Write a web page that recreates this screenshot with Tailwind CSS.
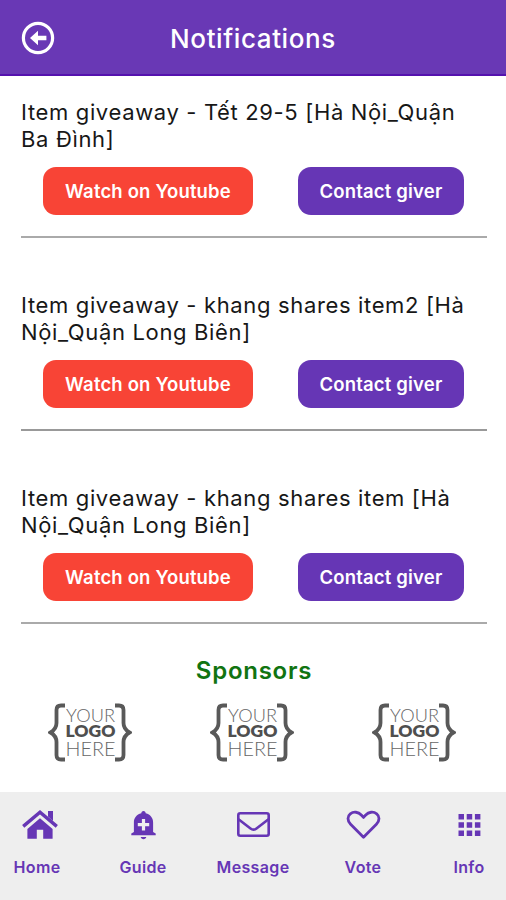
<!DOCTYPE html>
<html lang="vi">
<head>
<meta charset="utf-8">
<title>Notifications</title>
<script src="https://cdn.jsdelivr.net/npm/@tailwindcss/browser@4"></script>
</head>
<body class="bg-white">
<div class="flex h-[900px] w-[506px] flex-col overflow-hidden bg-white font-['Inter',sans-serif] text-[#171717]">
  <header class="grid h-[76px] shrink-0 grid-cols-[76px_1fr_76px] items-center border-b-2 border-[#5512ae] bg-[#6938b5] pt-0.5">
    <svg class="ml-[21px] size-[34px]" viewBox="0 0 34 34" fill="none"><circle cx="17" cy="17" r="14.6" stroke="#fff" stroke-width="3.200"/><path d="M9 17l8-7.200v4.900h8.400v4.600H17v4.900z" fill="#fff"/></svg>
    <h1 class="pt-0.5 text-center text-[26px] leading-8 font-medium tracking-[0.6px] whitespace-nowrap text-white">Notifications</h1>
  </header>
  <main class="flex flex-1 flex-col pr-[19px] pl-[21px]">
    <article class="h-[162px] border-b-2 border-[#aaaaaa] pt-[23px]">
      <h2 class="text-[22px] leading-[27px] tracking-[0.65px] whitespace-nowrap">Item giveaway - Tết 29-5 [Hà Nội_Quận<br>Ba Đình]</h2>
      <div class="mt-[14px] flex gap-[45px] pl-[22px] text-[18.5px] font-semibold tracking-[0.17px] text-white">
        <button class="h-12 w-[210px] rounded-[13px] bg-[#f84436] pt-px whitespace-nowrap">Watch on Youtube</button>
        <button class="h-12 w-[166px] rounded-[13px] bg-[#6636b5] pt-px whitespace-nowrap">Contact giver</button>
      </div>
    </article>
    <article class="mt-[31px] h-[162px] border-b-2 border-[#999999] pt-[23px]">
      <h2 class="text-[22px] leading-[27px] tracking-[0.65px] whitespace-nowrap">Item giveaway - khang shares item2 [Hà<br>Nội_Quận Long Biên]</h2>
      <div class="mt-[14px] flex gap-[45px] pl-[22px] text-[18.5px] font-semibold tracking-[0.17px] text-white">
        <button class="h-12 w-[210px] rounded-[13px] bg-[#f84436] pt-px whitespace-nowrap">Watch on Youtube</button>
        <button class="h-12 w-[166px] rounded-[13px] bg-[#6636b5] pt-px whitespace-nowrap">Contact giver</button>
      </div>
    </article>
    <article class="mt-[31px] h-[162px] border-b-2 border-[#aaaaaa] pt-[23px]">
      <h2 class="text-[22px] leading-[27px] tracking-[0.65px] whitespace-nowrap">Item giveaway - khang shares item [Hà<br>Nội_Quận Long Biên]</h2>
      <div class="mt-[14px] flex gap-[45px] pl-[22px] text-[18.5px] font-semibold tracking-[0.17px] text-white">
        <button class="h-12 w-[210px] rounded-[13px] bg-[#f84436] pt-px whitespace-nowrap">Watch on Youtube</button>
        <button class="h-12 w-[166px] rounded-[13px] bg-[#6636b5] pt-px whitespace-nowrap">Contact giver</button>
      </div>
    </article>
    <h2 class="mt-[31px] text-center text-[24px] leading-8 font-semibold tracking-[0.75px] text-[#117411]">Sponsors</h2>
    <div class="mt-4 flex gap-[78px] pl-[27px]">
      <svg class="h-[60px] w-[84px] shrink-0" viewBox="0 0 84 60"><use href="#logo"/></svg>
      <svg class="h-[60px] w-[84px] shrink-0" viewBox="0 0 84 60"><use href="#logo"/></svg>
      <svg class="h-[60px] w-[84px] shrink-0" viewBox="0 0 84 60"><use href="#logo"/></svg>
    </div>
  </main>
  <nav class="grid h-[108px] shrink-0 grid-cols-[74px_138px_82px_138px_74px] bg-[#eeeeee] pt-4 text-[16px] font-semibold tracking-[0.35px] text-[#6636b5]">
    <a class="flex flex-col items-center gap-[17px]">
      <svg class="ml-[6px] h-8 w-[38px]" viewBox="0 0 38 32" fill="currentColor"><path d="M27 3h5v10l-5-4.400z"/><path d="M19 10.200 31.600 21v9.700H22.200v-9h-6.400v9H6.400V21z"/><path d="M2.200 18.400 19 4.200l16.800 14.200" fill="none" stroke="currentColor" stroke-width="3.400"/></svg>
      <span class="leading-5">Home</span></a>
    <a class="flex flex-col items-center gap-[17px]">
      <svg class="h-8 w-[38px]" viewBox="0 0 38 32"><path d="M19.500 3c1.400 0 2.200 1 2.200 2.300 4.800 1.200 7.400 4.800 7.400 9.200V24l2.600 1.600V27.300H7.300v-1.700L9.900 24v-9.500c0-4.400 2.600-8 7.400-9.200C17.300 4 18.100 3 19.500 3zM16.700 29h5.600c-.3 1.400-1.400 2.200-2.800 2.200s-2.500-.8-2.800-2.200z" fill="currentColor"/><path d="M19.500 11v11.400M13.800 16.700h11.400" stroke="#eee" stroke-width="3.200"/></svg>
      <span class="leading-5">Guide</span></a>
    <a class="flex flex-col items-center gap-[17px]">
      <svg class="h-8 w-[38px]" viewBox="0 0 38 32" fill="none" stroke="currentColor" stroke-width="2.600"><rect x="4.300" y="5.300" width="30.400" height="22.400" rx="2"/><path d="M4.500 11.200l12 9.300c1.900 1.500 4.100 1.500 6 0l12-9.300"/></svg>
      <span class="leading-5">Message</span></a>
    <a class="flex flex-col items-center gap-[17px]">
      <svg class="h-8 w-[38px]" viewBox="0 0 38 32" fill="none" stroke="currentColor" stroke-width="2.800" stroke-linejoin="round"><path d="M19.500 29.200 6.600 16.300C3 12.700 3.400 8.100 6.300 5.800c3.400-2.600 8-1.900 11 1.200l2.200 2.400L21.700 7c3-3.100 7.600-3.800 11-1.200 2.900 2.300 3.300 6.900-.3 10.500z"/></svg>
      <span class="leading-5">Vote</span></a>
    <a class="flex flex-col items-center gap-[17px]">
      <svg class="h-8 w-[38px]" viewBox="0 0 38 32" fill="currentColor"><path d="M8.500 6h5.500v5.500h-5.500zM16.700 6h5.500v5.500h-5.500zM24.900 6h5.500v5.500h-5.500zM8.500 14.200h5.500v5.500h-5.500zM16.700 14.200h5.500v5.500h-5.500zM24.900 14.200h5.500v5.500h-5.500zM8.500 22.400h5.500v5.500h-5.500zM16.700 22.400h5.500v5.500h-5.500zM24.900 22.400h5.500v5.500h-5.500z"/></svg>
      <span class="leading-5">Info</span></a>
  </nav>
</div>
<svg width="0" height="0" class="absolute">
  <defs>
    <g id="logo" font-family="Lato, sans-serif" fill="#4f4f4f">
      <path d="M17 2.500h-4Q8.500 2.500 8.500 7v13q0 6-6 9.500 6 3.500 6 9.500v13q0 4.500 4.500 4.500h4M67 2.500h4q4.500 0 4.500 4.500v13q0 6 6 9.500-6 3.500-6 9.500v13q0 4.500-4.500 4.500h-4" fill="none" stroke="#595959" stroke-width="3.800"/>
      <text x="18" y="18.700" font-size="18.500" font-weight="300" textLength="49" lengthAdjust="spacingAndGlyphs" fill="#666">YOUR</text>
      <text x="17.500" y="34.300" font-size="17" font-weight="800" textLength="50" lengthAdjust="spacingAndGlyphs">LOGO</text>
      <text x="17.500" y="53" font-size="20.500" font-weight="300" textLength="50" lengthAdjust="spacingAndGlyphs" fill="#666">HERE</text>
    </g>
  </defs>
</svg>
</body>
</html>
